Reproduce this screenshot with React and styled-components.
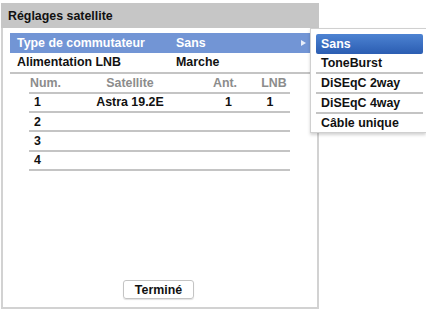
import React from "react"
import styled, { createGlobalStyle } from "styled-components"

const GlobalStyle = createGlobalStyle`
  html, body {
    margin: 0;
    padding: 0;
    background: #ffffff;
  }
  body {
    font-family: "Liberation Sans", Arial, sans-serif;
    font-size: 12.4px;
    font-weight: bold;
    color: #111;
  }
`

const satellites = [
  { num: "1", name: "Astra 19.2E", ant: "1", lnb: "1" },
  { num: "2", name: "", ant: "", lnb: "" },
  { num: "3", name: "", ant: "", lnb: "" },
  { num: "4", name: "", ant: "", lnb: "" },
]

const options = ["Sans", "ToneBurst", "DiSEqC 2way", "DiSEqC 4way", "Câble unique"]

const App = () => {
  return (
    <Screen>
      <GlobalStyle />
      <Panel>
        <TitleBar>Réglages satellite</TitleBar>
        <SettingsList>
          <SettingRow $active>
            <SettingLabel>Type de commutateur</SettingLabel>
            <SettingValue>Sans</SettingValue>
            <Arrow />
          </SettingRow>
          <SettingRow $last>
            <SettingLabel>Alimentation LNB</SettingLabel>
            <SettingValue>Marche</SettingValue>
          </SettingRow>
        </SettingsList>
        <Table>
          <HeadRow>
            <NumCell $head>Num.</NumCell>
            <Cell>Satellite</Cell>
            <Cell>Ant.</Cell>
            <Cell $shift>LNB</Cell>
          </HeadRow>
          {satellites.map((s) => (
            <BodyRow key={s.num}>
              <NumCell>{s.num}</NumCell>
              <Cell>{s.name}</Cell>
              <Cell $nudge>{s.ant}</Cell>
              <Cell>{s.lnb}</Cell>
            </BodyRow>
          ))}
        </Table>
        <Footer>
          <DoneButton>Terminé</DoneButton>
        </Footer>
      </Panel>
      <Menu>
        {options.map((o, i) => (
          <MenuItem key={o} $selected={i === 0} $divider={i > 0 && i < options.length - 1}>
            {o}
          </MenuItem>
        ))}
      </Menu>
    </Screen>
  )
}

export default App

const Screen = styled.div`
  position: relative;
  width: 426px;
  height: 310px;
  padding: 3px 0 0 1px;
  box-sizing: border-box;
`

const Panel = styled.div`
  width: 318px;
  height: 306px;
  box-sizing: border-box;
  border: 2px solid #d2d2d2;
  border-top: none;
  display: flex;
  flex-direction: column;
  background: #fff;
`

const TitleBar = styled.div`
  height: 25px;
  margin: 0 -2px;
  padding-left: 7px;
  background: #c6c6c6;
  display: flex;
  align-items: center;
  color: #111;
`

const SettingsList = styled.div`
  padding: 5px 7px 0;
`

const SettingRow = styled.div`
  position: relative;
  display: flex;
  align-items: center;
  height: ${(p) => (p.$active ? "20px" : "18px")};
  padding-left: 7px;
  background: ${(p) => (p.$active ? "#7295d5" : "transparent")};
  color: ${(p) => (p.$active ? "#fff" : "#111")};
  border-bottom: ${(p) => (p.$last ? "2px solid #c4c4c4" : "none")};
  padding-bottom: ${(p) => (p.$last ? "1px" : "0")};
`

const SettingLabel = styled.span`
  width: 159px;
`

const SettingValue = styled.span``

const Arrow = styled.span`
  position: absolute;
  right: 4px;
  top: 7px;
  width: 0;
  height: 0;
  border-top: 3.5px solid transparent;
  border-bottom: 3.5px solid transparent;
  border-left: 5px solid #e8eefa;
`

const Table = styled.div`
  margin: 0 0 0 26px;
  width: 261px;
`

const HeadRow = styled.div`
  display: grid;
  grid-template-columns: 31px 140px 50px 40px;
  align-items: center;
  height: 17.5px;
  border-bottom: 2px solid #c4c4c4;
  color: #8c8c8c;
`

const BodyRow = styled(HeadRow)`
  height: 17.4px;
  color: #111;
`

const Cell = styled.span`
  text-align: center;
  padding-left: ${(p) => (p.$shift ? "8px" : p.$nudge ? "7px" : "0")};
`

const NumCell = styled.span`
  padding-left: ${(p) => (p.$head ? "1px" : "5px")};
`

const Footer = styled.div`
  margin-top: auto;
  display: flex;
  justify-content: center;
  padding: 0 3px 8px 0;
`

const DoneButton = styled.div`
  width: 69px;
  height: 17px;
  border: 1px solid #c4c4c4;
  border-radius: 3px;
  box-shadow: 0 1px 1px rgba(0, 0, 0, 0.12);
  display: flex;
  align-items: center;
  justify-content: center;
  color: #111;
`

const Menu = styled.div`
  position: absolute;
  left: 310px;
  top: 28px;
  width: 116px;
  height: 105px;
  box-sizing: border-box;
  padding: 5px 3px 0 5px;
  background: #fff;
  border: 1px solid #d0d0d0;
  border-right: none;
  box-shadow: 0 2px 3px rgba(0, 0, 0, 0.18);
`

const MenuItem = styled.div`
  height: ${(p) => (p.$selected ? "20px" : "18px")};
  display: flex;
  align-items: center;
  padding-left: 5px;
  border-radius: ${(p) => (p.$selected ? "2px" : "0")};
  color: ${(p) => (p.$selected ? "#fff" : "#111")};
  background: ${(p) =>
    p.$selected ? "linear-gradient(#4d83d2, #2b5db2)" : "transparent"};
  border-bottom: ${(p) => (p.$divider ? "2px solid #c4c4c4" : "none")};
`
